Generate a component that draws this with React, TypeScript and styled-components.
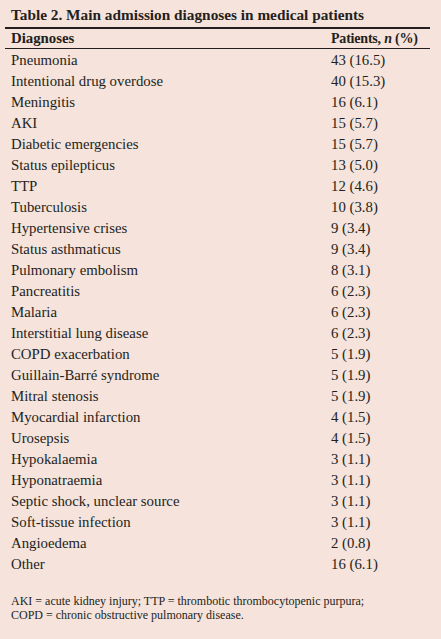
import React, { FC } from 'react';
import styled, { createGlobalStyle } from 'styled-components';

const GlobalStyle = createGlobalStyle`
	html, body {
		margin: 0;
		padding: 0;
		background: #f5e3dc;
	}
	body {
		font-family: 'Liberation Serif', 'Times New Roman', serif;
		color: #231f20;
	}
`;

const Page = styled.div`
	width: 441px;
	height: 639px;
	padding: 6px 11px 0 5px;
	box-sizing: border-box;
`;

const Title = styled.h1`
	margin: 0;
	padding: 0 0 3px 6px;
	font-size: 15.3px;
	line-height: 18px;
	font-weight: bold;
	white-space: nowrap;
	border-bottom: 2px solid #231f20;
`;

const Row = styled.div<{ $head?: boolean }>`
	display: grid;
	grid-template-columns: 320px 1fr;
	padding-left: 6px;
	height: ${({ $head }) => ($head ? '19px' : '21px')};
	align-items: center;
	font-size: 14.8px;
	font-weight: ${({ $head }) => ($head ? 'bold' : 'normal')};
	border-bottom: ${({ $head }) => ($head ? '1px solid #231f20' : 'none')};
`;

const HeadValue = styled.span`
	font-size: 14px;
	letter-spacing: -0.2px;
	white-space: nowrap;
`;

const Body = styled.div`
	padding-top: 1px;
`;

const Footnote = styled.p`
	margin: 19px 0 0;
	padding-left: 6px;
	font-size: 12px;
	line-height: 14px;
	white-space: nowrap;
`;

const rows: [string, string][] = [
	['Pneumonia', '43 (16.5)'],
	['Intentional drug overdose', '40 (15.3)'],
	['Meningitis', '16 (6.1)'],
	['AKI', '15 (5.7)'],
	['Diabetic emergencies', '15 (5.7)'],
	['Status epilepticus', '13 (5.0)'],
	['TTP', '12 (4.6)'],
	['Tuberculosis', '10 (3.8)'],
	['Hypertensive crises', '9 (3.4)'],
	['Status asthmaticus', '9 (3.4)'],
	['Pulmonary embolism', '8 (3.1)'],
	['Pancreatitis', '6 (2.3)'],
	['Malaria', '6 (2.3)'],
	['Interstitial lung disease', '6 (2.3)'],
	['COPD exacerbation', '5 (1.9)'],
	['Guillain-Barré syndrome', '5 (1.9)'],
	['Mitral stenosis', '5 (1.9)'],
	['Myocardial infarction', '4 (1.5)'],
	['Urosepsis', '4 (1.5)'],
	['Hypokalaemia', '3 (1.1)'],
	['Hyponatraemia', '3 (1.1)'],
	['Septic shock, unclear source', '3 (1.1)'],
	['Soft-tissue infection', '3 (1.1)'],
	['Angioedema', '2 (0.8)'],
	['Other', '16 (6.1)'],
];

const App: FC = () => (
	<>
		<GlobalStyle />
		<Page>
			<Title>Table 2. Main admission diagnoses in medical patients</Title>
			<Row $head>
				<span>Diagnoses</span>
				<HeadValue>
					Patients, <i>n</i> (%)
				</HeadValue>
			</Row>
			<Body>
				{rows.map(([name, value]) => (
					<Row key={name}>
						<span>{name}</span>
						<span>{value}</span>
					</Row>
				))}
			</Body>
			<Footnote>
				AKI = acute kidney injury; TTP = thrombotic thrombocytopenic purpura;
				<br />
				COPD = chronic obstructive pulmonary disease.
			</Footnote>
		</Page>
	</>
);

export default App;
